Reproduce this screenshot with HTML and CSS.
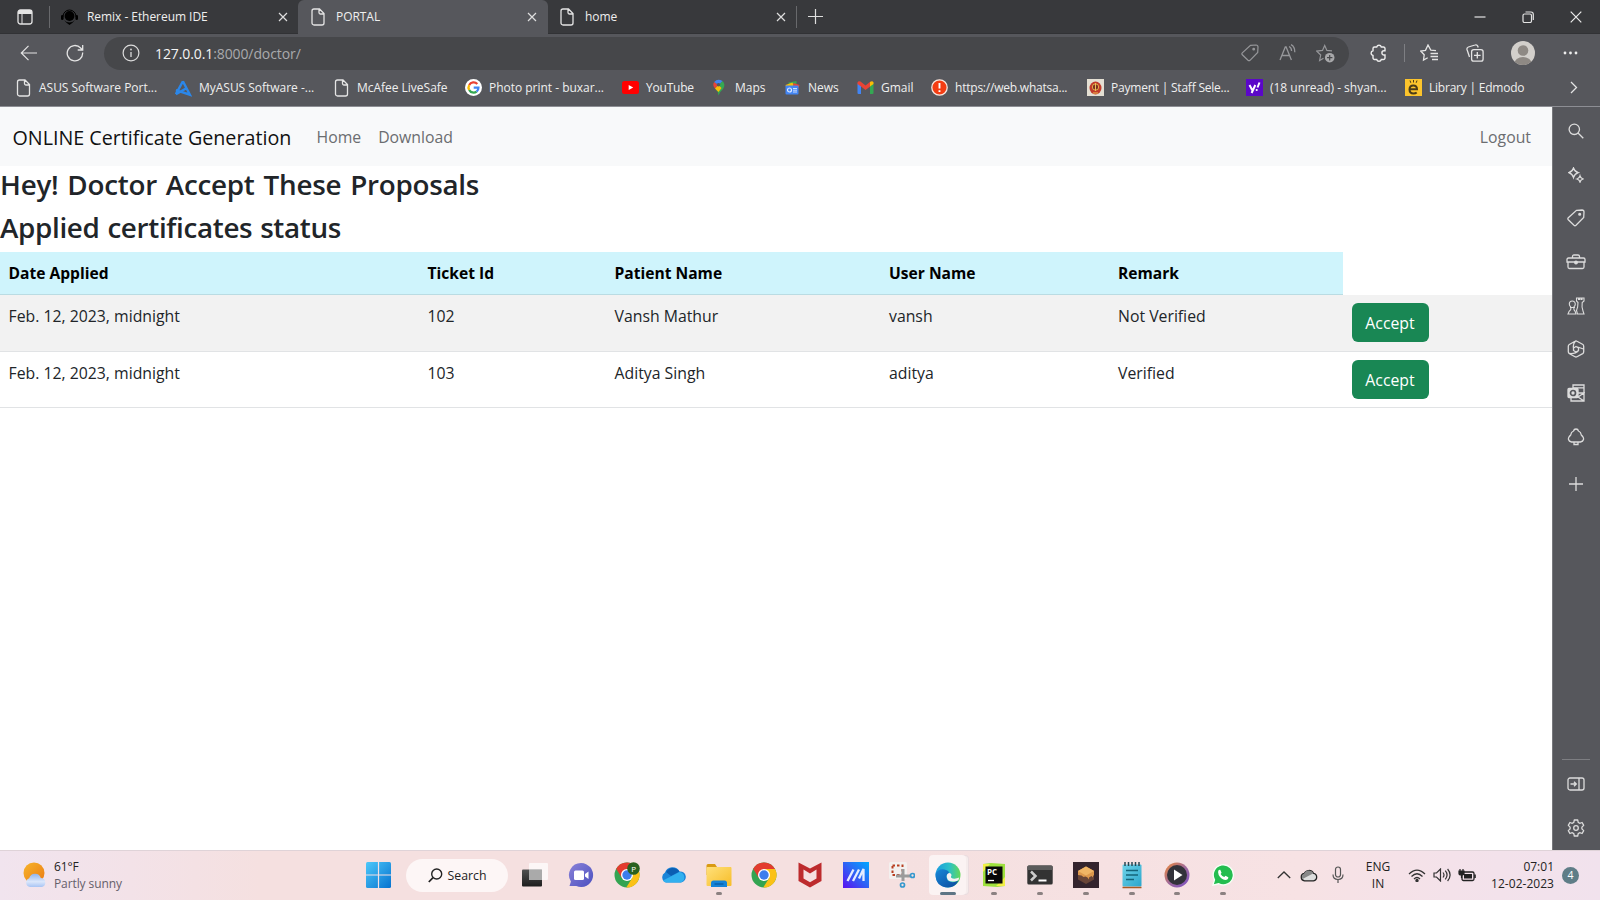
FILE: index.html
```html
<!DOCTYPE html>
<html lang="en">
<head>
<meta charset="utf-8">
<title>PORTAL</title>
<link rel="stylesheet" href="styles.css">
</head>
<body>
<svg class="defs" width="0" height="0">
  <defs>
    <linearGradient id="win" x1="0" y1="0" x2="1" y2="1"><stop offset="0" stop-color="#4cc8fa"/><stop offset="1" stop-color="#0672cf"/></linearGradient>
    <linearGradient id="sun" x1="0" y1="0" x2="1" y2="1"><stop offset="0" stop-color="#f7b52b"/><stop offset="1" stop-color="#ea7a12"/></linearGradient>
    <linearGradient id="cloud" x1="0" y1="0" x2="0" y2="1"><stop offset="0" stop-color="#8fb4ee"/><stop offset=".6" stop-color="#dbe7fb"/><stop offset="1" stop-color="#a8c4f4"/></linearGradient>
    <linearGradient id="chat" x1="0" y1="0" x2="1" y2="1"><stop offset="0" stop-color="#8a82d8"/><stop offset="1" stop-color="#4a4fc0"/></linearGradient>
    <linearGradient id="folder" x1="0" y1="0" x2="1" y2="1"><stop offset="0" stop-color="#ffe07a"/><stop offset="1" stop-color="#f7bd28"/></linearGradient>
    <linearGradient id="asus" x1="1" y1="0" x2="0" y2="1"><stop offset="0" stop-color="#00a8ff"/><stop offset=".5" stop-color="#2f62f5"/><stop offset="1" stop-color="#5a10f0"/></linearGradient>
    <linearGradient id="edgeA" x1="0" y1=".3" x2="1" y2=".3"><stop offset="0" stop-color="#1a9be0"/><stop offset=".55" stop-color="#2bc0c8"/><stop offset="1" stop-color="#63d957"/></linearGradient>
    <linearGradient id="edgeB" x1="0" y1="0" x2="1" y2="1"><stop offset="0" stop-color="#1787d8"/><stop offset="1" stop-color="#0c4a9c"/></linearGradient>
    <linearGradient id="ring" x1="0" y1="0" x2="1" y2="1"><stop offset="0" stop-color="#f08a35"/><stop offset=".5" stop-color="#a06a9a"/><stop offset="1" stop-color="#7a50c8"/></linearGradient>
    <linearGradient id="dark" x1="0" y1="0" x2="0" y2="1"><stop offset="0" stop-color="#505050"/><stop offset="1" stop-color="#1e1e1e"/></linearGradient>
    <linearGradient id="note" x1="0" y1="0" x2="1" y2="1"><stop offset="0" stop-color="#6fd3e8"/><stop offset="1" stop-color="#2ba6cc"/></linearGradient>
    <symbol id="page" viewBox="0 0 14 18"><path d="M3 1h5.500l4.500 4.500V15a2 2 0 0 1-2 2H3a2 2 0 0 1-2-2V3a2 2 0 0 1 2-2zM8 1v3.500a1.500 1.500 0 0 0 1.500 1.500H13" fill="none" stroke="#e4e4e4" stroke-width="1.300"/></symbol>
    <symbol id="close" viewBox="0 0 10 10"><path d="M1 1l8 8M9 1l-8 8" stroke="#dedede" stroke-width="1.200"/></symbol>
    <symbol id="chrome" viewBox="0 0 26 26">
      <circle cx="13" cy="13" r="12.500" fill="#33a451"/>
      <path d="M13 7h11a12.500 12.500 0 0 1-11.800 18.500L18.200 16z" fill="#fbc116"/>
      <path d="M2.200 6.700L7.800 16 13 7h11a12.500 12.500 0 0 0-21.800-.3z" fill="#e33b2e"/>
      <circle cx="13" cy="13" r="6" fill="#fff"/><circle cx="13" cy="13" r="4.700" fill="#3b7ded"/>
    </symbol>
  </defs>
</svg>

<header class="browser">
  <div class="tabs">
    <div class="tab-menu"><svg width="16" height="16" viewBox="0 0 16 16"><rect x="1" y="1" width="14" height="14" rx="2.500" fill="none" stroke="#e4e4e4" stroke-width="1.300"/><path d="M1 3.500A2.500 2.500 0 0 1 3.500 1h9A2.500 2.500 0 0 1 15 3.500V5H1z" fill="#e4e4e4"/><path d="M5 5v10" stroke="#e4e4e4"/></svg></div>
    <div class="tab tab-first">
      <svg width="17" height="16" viewBox="0 0 17 16"><circle cx="8.500" cy="7" r="4.900" fill="#000"/><path d="M2 7.500a6.500 6.500 0 0 1 13 0" fill="none" stroke="#000"/><rect x="0" y="6" width="2.600" height="5" rx="1.300"/><rect x="14.400" y="6" width="2.600" height="5" rx="1.300"/><path d="M3 11q2.500 2.500 5.500 2.500T14 11l-2.500 2.800-3 2.200-3-2.200z"/></svg>
      <span>Remix - Ethereum IDE</span><svg class="x" width="10" height="10"><use href="#close"/></svg>
    </div>
    <div class="tab tab-active"><svg width="14" height="18"><use href="#page"/></svg><span>PORTAL</span><svg class="x" width="10" height="10"><use href="#close"/></svg></div>
    <div class="tab tab-last"><svg width="14" height="18"><use href="#page"/></svg><span>home</span><svg class="x" width="10" height="10"><use href="#close"/></svg></div>
    <svg class="plus" width="15" height="15" viewBox="0 0 15 15"><path d="M7.500 0v15M0 7.500h15" stroke="#dedede" stroke-width="1.200"/></svg>
    <div class="window-buttons">
      <svg width="12" height="12" viewBox="0 0 12 12"><path d="M.5 6h11" stroke="#e4e4e4" stroke-width="1.200"/></svg>
      <svg width="12" height="12" viewBox="0 0 12 12" fill="none" stroke="#e4e4e4" stroke-width="1.200"><rect x="1" y="3" width="8.500" height="8.500" rx="1.500"/><path d="M3.500 1h5.500a2.300 2.300 0 0 1 2.300 2.300V9"/></svg>
      <svg width="12" height="12" viewBox="0 0 12 12"><path d="M.7.7l10.600 10.600M11.300.7L.7 11.300" stroke="#ededed" stroke-width="1.200"/></svg>
    </div>
  </div>

  <div class="toolbar">
    <svg class="back" width="18" height="16" viewBox="0 0 18 16" fill="none" stroke="#e4e4e4" stroke-width="1.200"><path d="M17 8H1.500M8.500.8L1.300 8l7.200 7.200"/></svg>
    <svg class="reload" width="18" height="18" viewBox="0 0 18 18" fill="none" stroke="#e4e4e4" stroke-width="1.300"><path d="M16.600 8.500A7.700 7.700 0 1 1 14.600 4l1.600 1.700M16.700 1v5h-5"/></svg>
    <div class="address">
      <svg width="18" height="18" viewBox="0 0 18 18"><circle cx="9" cy="9" r="7.900" fill="none" stroke="#dcdcdc" stroke-width="1.200"/><path d="M9 8v5" stroke="#dcdcdc" stroke-width="1.300"/><circle cx="9" cy="5.500" r=".9" fill="#dcdcdc"/></svg>
      <span class="url"><b>127.0.0.1</b>:8000/doctor/</span>
      <div class="address-icons">
        <svg width="18" height="18" viewBox="0 0 18 18" fill="none" stroke="#96979a" stroke-width="1.200"><path d="M9.500 1.300L15 1a2 2 0 0 1 2 2l-.3 5.500L9 16.300a1.500 1.500 0 0 1-2 0l-5.700-5.500a1.500 1.500 0 0 1 0-2z"/><circle cx="12.700" cy="5.200" r=".8" fill="#96979a"/></svg>
        <svg width="18" height="18" viewBox="0 0 18 18" fill="none" stroke="#96979a" stroke-width="1.300"><path d="M1 16L6.300 3h.8l5.300 13M3 11.500h7.500M10 2.500q2.500 1 2.600 4.500M12 .6q4 2 3.800 7.600"/></svg>
        <svg width="19" height="19" viewBox="0 0 19 19"><path d="M16 6.900l-5.100-.5L8.700 1.500 6.500 6.400l-5.700.7L4.700 11l-1.100 5.500L7.500 14.300" fill="none" stroke="#96979a" stroke-width="1.200"/><circle cx="13.700" cy="13.700" r="4.800" fill="#a8a8aa"/><path d="M13.700 11v5.400M11 13.700h5.400" stroke="#46474a" stroke-width="1.200"/></svg>
      </div>
    </div>
    <svg class="ext" width="17" height="18" viewBox="0 0 17 18"><path d="M3.500 3h2.200a2.400 2.400 0 0 1 4.600 0h2.200A1.500 1.500 0 0 1 14 4.500v2.300h-1a2.100 2.100 0 0 0 0 4.200h1v3a1.500 1.500 0 0 1-1.500 1.500h-2.200a2.400 2.400 0 0 1-4.600 0H3.500A1.500 1.500 0 0 1 2 14v-2.500a2.400 2.400 0 0 1 0-4.700V4.500A1.500 1.500 0 0 1 3.500 3z" transform="translate(1 0)" fill="none" stroke="#ededed" stroke-width="1.400"/></svg>
    <i class="sep"></i>
    <svg class="fav" width="18" height="18" viewBox="0 0 18 18" fill="none" stroke="#e4e4e4" stroke-width="1.300"><path d="M16 6.700l-5.200-.6L8 1 5.500 6.300l-4.800.7 3.500 3.800L3.500 16l4.200-2.300M10.500 9.500H18M10.500 12.500H18M12 15.500h6"/></svg>
    <svg class="coll" width="18" height="18" viewBox="0 0 18 18" fill="none" stroke="#e4e4e4" stroke-width="1.300"><rect x="5.600" y="5.600" width="11.500" height="11.500" rx="2.200"/><path d="M11.300 8v6.600M8 11.300h6.600M3.500 13L1 5.500A2.200 2.200 0 0 1 2.400 3L9 1a2.200 2.200 0 0 1 2.800 1.300l.4 1.200"/></svg>
    <svg class="avatar" width="24" height="24" viewBox="0 0 24 24"><clipPath id="av"><circle cx="12" cy="12" r="12"/></clipPath><g clip-path="url(#av)"><rect width="24" height="24" fill="#d2cfcb"/><circle cx="12" cy="9.500" r="5.300" fill="#8e8984"/><ellipse cx="12" cy="23" rx="8.800" ry="7" fill="#8e8984"/></g></svg>
    <svg class="more" width="15" height="4" viewBox="0 0 15 4" fill="#ededed"><circle cx="2" cy="2" r="1.400"/><circle cx="7.500" cy="2" r="1.400"/><circle cx="13" cy="2" r="1.400"/></svg>
  </div>

  <nav class="bookmarks">
    <a><svg width="16" height="18"><use href="#page"/></svg>ASUS Software Port...</a>
    <a><svg width="17" height="18" viewBox="0 0 17 18"><path d="M8.500 2.500L1.500 15.500M8.500 2.500l7 13.500L1.500 11.500M1.500 15.500L12 9.500" transform="translate(-.6 -.3)" fill="none" stroke="#2b87ea" stroke-width="2.400"/></svg>MyASUS Software -...</a>
    <a><svg width="16" height="18"><use href="#page"/></svg>McAfee LiveSafe</a>
    <a><svg width="17" height="17" viewBox="0 0 17 17" fill="none" stroke-width="2.300"><circle cx="8.500" cy="8.500" r="8.500" fill="#fff"/><path d="M12.300 5A5 5 0 0 0 4.200 6" stroke="#ea4335"/><path d="M4.200 6a5 5 0 0 0 0 5" stroke="#fbbc05"/><path d="M4.200 11a5 5 0 0 0 7.400 1.600" stroke="#34a853"/><path d="M11.600 12.600a5 5 0 0 0 1.800-3.900H8.700" stroke="#4285f4"/></svg>Photo print - buxar...</a>
    <a class="tight"><svg width="17" height="13" viewBox="0 0 17 13"><rect width="17" height="13" rx="2.500" fill="#f00"/><path d="M6.700 4v5l4.500-2.500z" fill="#fff"/></svg>YouTube</a>
    <a><svg width="16" height="17" viewBox="0 0 16 17"><path d="M7 16.500Q6.500 12 3.500 9.500L11 2q3.500 3.500.5 8-3.500 3-4.500 6.500z" fill="#34a853"/><path d="M3.500 9.500q-3-3.500-.8-6.500L7 6z" fill="#ea4335"/><path d="M2.700 3Q6-1 11 2L7 6z" fill="#4285f4"/><path d="M3.500 9.500L7 6l3 3-3 4z" fill="#fbbc05"/><circle cx="7" cy="5.800" r="1.800" fill="#56575c"/></svg>Maps</a>
    <a><svg width="16" height="16" viewBox="0 0 16 16"><path d="M4 2.500L12 1v6H4z" fill="#34a853"/><path d="M1 5l7-2.500L10 8H2z" fill="#fbbc05"/><path d="M9 3l6 2-1.500 4H8z" fill="#ea4335"/><rect x="1" y="5.500" width="13" height="9" rx="1" fill="#4285f4"/><circle cx="5" cy="10" r="2" fill="none" stroke="#dce8ff" stroke-width="1.200"/><path d="M8.500 8.500h4M8.500 10.200h4M8.500 12h4" stroke="#dce8ff" stroke-width=".9"/></svg>News</a>
    <a><svg width="16" height="13" viewBox="0 0 16 13"><path d="M0 2.500h3.500V13H1a1 1 0 0 1-1-1z" fill="#4285f4"/><path d="M12.500 2.500H16V12a1 1 0 0 1-1 1h-2.500z" fill="#34a853"/><path d="M0 3V1.500Q1-.6 3 .6L8 4.500 13 .6v4.600L8 9 3.500 5.500z" fill="#ea4335"/><path d="M12.500 1Q15-.6 16 1.500V3l-3.500 2.600z" fill="#fbbc05"/></svg>Gmail</a>
    <a class="tight"><svg width="17" height="17" viewBox="0 0 17 17"><circle cx="8.500" cy="8.500" r="7.700" fill="#f43d13" stroke="#f8e8e0" stroke-width="1.300"/><path d="M8.500 4v5.500M8.500 11.200v1.900" stroke="#fff" stroke-width="1.900"/></svg>https://web.whatsa...</a>
    <a class="tight"><svg width="17" height="17" viewBox="0 0 17 17"><rect width="17" height="17" fill="#e4dfd3"/><ellipse cx="8.500" cy="9" rx="6" ry="6.500" fill="#c23b2b"/><circle cx="8.500" cy="8" r="3.200" fill="#7e3020" stroke="#e3ac4a"/><path d="M8.500 4v8M6 14h5" stroke="#edc055"/></svg>Payment | Staff Sele...</a>
    <a><svg width="17" height="17" viewBox="0 0 17 17"><rect width="17" height="17" fill="#5b07c9"/><path d="M3.500 6l2.700 5M9.300 6l-3.700 8M13.500 3.500l-2 5" stroke="#fff" stroke-width="2"/><circle cx="10.700" cy="11" r="1.100" fill="#fff"/></svg>(18 unread) - shyan...</a>
    <a class="tight"><svg width="17" height="17" viewBox="0 0 17 17"><rect width="17" height="17" fill="#fcc42c"/><path d="M4.800 10.300h7.200q0-3.800-3.700-3.800T4.500 10.500q0 4 4 4 2 0 3.200-1" fill="none" stroke="#4b3c18" stroke-width="2"/><path d="M5 1.500l.8 2.300M8.500 1v2.500M12 1.500l-.8 2.300" stroke="#4b3c18"/></svg>Library | Edmodo</a>
    <svg class="chev" width="8" height="13" viewBox="0 0 8 13"><path d="M1 1l5.500 5.500L1 12" fill="none" stroke="#e4e4e4" stroke-width="1.300"/></svg>
  </nav>
</header>

<div class="middle">
  <main class="page">
    <nav class="navbar"><span class="brand">ONLINE Certificate Generation</span><a>Home</a><a>Download</a><a class="logout">Logout</a></nav>
    <h3 class="h-hey">Hey! Doctor Accept These Proposals</h3>
    <h3 class="h-status">Applied certificates status</h3>
    <table>
      <colgroup><col class="c1"><col class="c2"><col class="c3"><col class="c4"><col class="c5"><col class="c6"></colgroup>
      <thead><tr><th>Date Applied</th><th>Ticket Id</th><th>Patient Name</th><th>User Name</th><th>Remark</th></tr></thead>
      <tbody>
        <tr class="odd"><td>Feb. 12, 2023, midnight</td><td>102</td><td>Vansh Mathur</td><td>vansh</td><td>Not Verified</td><td><button>Accept</button></td></tr>
        <tr><td>Feb. 12, 2023, midnight</td><td>103</td><td>Aditya Singh</td><td>aditya</td><td>Verified</td><td><button>Accept</button></td></tr>
      </tbody>
    </table>
  </main>
  <aside class="sidebar">
    <div><svg width="16" height="16" viewBox="0 0 16 16"><circle cx="6.300" cy="6.300" r="5.200"/><path d="M10 10l5.300 5.300"/></svg></div>
    <div><svg width="16" height="16" viewBox="0 0 16 16"><path d="M5.500 1q1 3.500 4.700 4.700Q6.500 7 5.500 10.500 4.500 7 .8 5.700 4.500 4.500 5.500 1zM12 9q.6 2.300 3 3-2.400.8-3 3-.6-2.200-3-3 2.400-.7 3-3z"/></svg></div>
    <div><svg width="18" height="18" viewBox="0 0 18 18"><path d="M9.500 1.300L15 1a2 2 0 0 1 2 2l-.3 5.500L9 16.300a1.500 1.500 0 0 1-2 0l-5.700-5.500a1.500 1.500 0 0 1 0-2z"/><circle cx="12.700" cy="5.200" r=".9" fill="#ddd"/></svg></div>
    <div><svg width="20" height="16" viewBox="0 0 20 16"><path d="M2.500 4h15q1.500 0 1.500 1.500V8H1V5.500Q1 4 2.500 4zM2 8v5q0 1.500 1.500 1.500h13q1.500 0 1.500-1.500V8M6.500 4V2.500Q6.500 1 8 1h4q1.500 0 1.500 1.500V4"/><circle cx="10" cy="8.500" r="1.300" fill="#ddd"/></svg></div>
    <div><svg class="fine" width="18" height="18" viewBox="0 0 18 18"><path d="M4 10q-1.700-1-1.700-3a3 3 0 0 1 6 0q0 2-1.600 3M3 10.500h5M4 10.500q.3 2.500-2 4L1 17h8l-.8-2.500Q6.500 13 6.800 10.500M9.500 1v3l1.500 1.500q0 5-1.500 8l1 3.500H17l-1-3q-1.500-4-.8-8.500L17 4V1h-2v1.500h-1V1h-1.500v1.500h-1V1z"/></svg></div>
    <div><svg width="18" height="18" viewBox="0 0 18 18"><path d="M8 1.300q1-.6 2 0l5.500 3q1.200.7 1.200 2v5.500q0 1.200-1 1.800L10 16.700q-1 .6-2 0l-5.500-3q-1.200-.7-1.200-2V6.300q0-1.200 1-1.800zM9 6.500l2.500 1.500v2.500L9 12l-2.500-1.500V8zM6.500 8q-.8-4 2-7M9 6.500L16.500 9M11.500 10.500q-3 3.500-9 3"/></svg></div>
    <div><svg width="18" height="18" viewBox="0 0 18 18"><path d="M6 4V1h11v16H4v-3M6 3.800h11M11 9h6l-6 4 6 4"/><rect x="1" y="4.500" width="10" height="9" rx="1" fill="#ddd"/><circle cx="6" cy="9" r="2.500" stroke="#56575c" stroke-width="1.700"/></svg></div>
    <div><svg width="18" height="18" viewBox="0 0 18 18"><path d="M9 1Q11 1 11.500 3q2.500 1 2.800 4 2.700 2.500 2.200 4.500T13.500 14h-9q-2.500-.5-3-2.500T3.700 7Q4 4 6.500 3 7 1 9 1zM7 14v2.500h4V14"/></svg></div>
    <div class="add"><svg width="14" height="14" viewBox="0 0 14 14"><path d="M7 0v14M0 7h14"/></svg></div>
    <hr>
    <div><svg width="18" height="14" viewBox="0 0 18 14"><rect x="1" y="1" width="16" height="12" rx="2"/><path d="M12 1v12M3.500 7h5.500M7 4.700L9.300 7 7 9.300"/></svg></div>
    <div class="gear"><svg width="18" height="18" viewBox="0 0 18 18"><circle cx="9" cy="9" r="2.300"/><path d="M7.300 1h3.400l.5 2.400 1.500.9 2.400-.8 1.600 2.900-1.800 1.700v1.800l1.800 1.700-1.600 2.900-2.400-.8-1.500.9-.5 2.400H7.300l-.5-2.400-1.500-.9-2.400.8-1.600-2.900 1.800-1.700V8.100L1.300 6.400l1.600-2.900 2.400.8 1.500-.9z" stroke-linejoin="round"/></svg></div>
  </aside>
</div>

<footer class="taskbar">
  <div class="weather"><svg width="24" height="26" viewBox="0 0 24 26"><circle cx="11" cy="11" r="10.500" fill="url(#sun)"/><path d="M7 25a4.500 4.500 0 0 1-.8-8.700A6 6 0 0 1 17.800 16 4.600 4.600 0 0 1 19 25z" fill="url(#cloud)"/></svg><div><p>61°F</p><p class="dim">Partly sunny</p></div></div>
  <div class="start"><svg width="25" height="26" viewBox="0 0 25 26"><rect width="25" height="26" rx="1.500" fill="url(#win)"/><path d="M12.500 0v26M0 13h25" stroke="#f3e0e4" stroke-width="1.200"/></svg></div>
  <div class="search"><svg width="15" height="15" viewBox="0 0 15 15"><circle cx="8.700" cy="6" r="5" fill="none" stroke="#222" stroke-width="1.400"/><path d="M5 9.700L.8 14" stroke="#222" stroke-width="1.700"/></svg>Search</div>
  <div class="apps">
    <div><svg width="26" height="26" viewBox="0 0 26 26"><rect x="0" y="7.500" width="20" height="17" rx="1" fill="url(#dark)"/><rect x="7" y="1" width="19" height="17" rx="1" fill="#fff" opacity=".7"/><rect x="7" y="7.500" width="13" height="10.500" fill="#aaa"/></svg></div>
    <div><svg width="26" height="26" viewBox="0 0 26 26"><path d="M13 1a12 12 0 1 1-4.700 23H1.500l1.400-4.500A12 12 0 0 1 13 1z" fill="url(#chat)"/><rect x="6" y="8.500" width="10" height="9.500" rx="1.500" fill="#fff"/><path d="M17 12l3.500-2.500v7.500L17 14.500z" fill="#fff"/></svg></div>
    <div><svg width="26" height="26" viewBox="0 0 26 26"><use href="#chrome" width="26" height="26"/><circle cx="19.500" cy="6.500" r="6.300" fill="#28611f"/><text x="17.200" y="9.600" font-size="8" fill="#fff">P</text></svg></div>
    <div><svg width="26" height="18" viewBox="0 0 26 18"><path d="M6 16.500A5.500 5.500 0 0 1 5 6.500 8 8 0 0 1 19.500 5.500 5.500 5.500 0 0 1 21 16.500z" fill="#1a84d8"/><path d="M6 6A8 8 0 0 1 19.500 5.500L11 10z" fill="#0b5eb3"/><path d="M3 14.500L19.500 6A5.500 5.500 0 0 1 21 16.500H6q-2 0-3-2z" fill="#31b0ef"/></svg></div>
    <div class="run"><svg width="26" height="26" viewBox="0 0 26 26"><path d="M.5 3.500Q.5 2 2 2h7l2 3H25v8H.5z" fill="#d99a13"/><rect x=".5" y="5" width="25" height="19" rx="1" fill="url(#folder)"/><path d="M5 25v-4q0-2.500 2.500-2.500h11Q21 18.500 21 21v4z" fill="#1583d7"/><path d="M8.500 22h9" stroke="#0a60ab" stroke-width="1.500"/></svg></div>
    <div><svg width="26" height="26"><use href="#chrome"/></svg></div>
    <div><svg width="24" height="26" viewBox="0 0 24 26"><path d="M.5.500L12 6.500 23.500.5v18.500L12 25.500.5 19z" fill="#bd2b2d"/><path d="M5.500 7.500L12 11.500l6.500-4v9L12 20.300l-6.500-3.800z" fill="#f5e0e0"/></svg></div>
    <div><svg width="26" height="26" viewBox="0 0 26 26"><rect width="26" height="26" fill="url(#asus)"/><path d="M4.500 19L10.500 7.500M10 19L16 7.500M16 16.500L20.500 7v12" fill="none" stroke="#e5ecff" stroke-width="2.300"/></svg></div>
    <div><svg width="26" height="26" viewBox="0 0 26 26"><rect x="0" y="0" width="18" height="17" rx="1.500" fill="#f3f0ef"/><rect x="3.500" y="3.500" width="10" height="9.500" fill="none" stroke="#b83e20" stroke-width="2" stroke-dasharray="2.500 2"/><path d="M7 14h14M14 7v12" stroke="#9b9b9b" stroke-width="3"/><g fill="none" stroke="#3598ce" stroke-width="1.700"><circle cx="23.500" cy="13.500" r="2"/><circle cx="13.500" cy="23" r="2"/></g></svg></div>
    <div class="edge"><svg width="26" height="26" viewBox="0 0 26 26"><circle cx="13" cy="13" r="12.500" fill="url(#edgeA)"/><path d="M.6 12Q3 6.500 9.500 7.500q5 1 4.500 4-3 .5-2.500 4 1 5.500 8 4.500l4-1.500Q20 25.500 13 25.500.5 25 .6 12z" fill="url(#edgeB)"/><path d="M14 11q-3 1-2 5t7 3.500q3.500-.5 4.500-1.500l.7-2.500q-3 1.500-6.500 1-2.700-.7-1.200-3Q16.500 11 14 11z" fill="#f6f1f2"/></svg></div>
    <div class="run"><svg width="26" height="26" viewBox="0 0 26 26"><path d="M2 2l8-1 14 1v22l-8 1L2 24z" fill="#9ee13e"/><path d="M2 2h7l-7 8zM24 15v9h-9z" fill="#f1ef45"/><rect x="4.500" y="4.500" width="17" height="17" fill="#080808"/><text x="6" y="12.500" font-size="8" font-weight="700" fill="#fff">PC</text><path d="M7 18.500h6" stroke="#fff" stroke-width="1.300"/></svg></div>
    <div class="run"><svg width="26" height="20" viewBox="0 0 26 20"><rect x=".3" y=".5" width="25.400" height="19" rx="1.500" fill="#333"/><path d="M.3 5V2q0-1.500 1.500-1.500h22.400q1.500 0 1.500 1.500v3z" fill="#5c5c5c"/><path d="M4 6.500l4.500 4.500L4 15.500" fill="none" stroke="#ccc" stroke-width="2.500"/><path d="M11.500 15.500h8" stroke="#fff" stroke-width="2"/></svg></div>
    <div class="run"><svg width="26" height="26" viewBox="0 0 26 26"><rect width="26" height="26" fill="#34242d"/><path d="M13 4.500l8 4.500v8.500L13 22l-8-4.500V9z" fill="#694537"/><path d="M13 4.500l8 4.500v4l-1 1v1.500l-1.500-1.500-2.500 1.500v2l-1.500-2-2-1-2 .5-2-1.500L5 13V9z" fill="#dd984c"/><path d="M13 4.500L21 9l-8 4.500L5 9z" fill="#f0b565"/></svg></div>
    <div class="run"><svg width="20" height="27" viewBox="0 0 20 27"><rect x=".5" y="2.500" width="19" height="22" rx="1" fill="url(#note)"/><path d="M.5 25.500h19" stroke="#aa5b23" stroke-width="1.500"/><path d="M3 0v4M6.500 0v4M10 0v4M13.500 0v4M17 0v4" stroke="#2b4651" stroke-width="1.500"/><path d="M4 8.500h12M4 13h12M4 17.500h8" stroke="#14647a" stroke-width="1.500"/></svg></div>
    <div class="run"><svg width="26" height="26" viewBox="0 0 26 26"><circle cx="13" cy="13" r="12.500" fill="url(#ring)"/><circle cx="13" cy="13" r="10" fill="#32323a"/><path d="M10 7.500v11l8.500-5.500z" fill="#fff"/></svg></div>
    <div class="run"><svg width="22" height="22" viewBox="0 0 24 24"><path d="M1 23l1.700-5.800A11 11 0 1 1 7 21.500z" fill="#24bd4f" stroke="#f6fff6" stroke-width="1.500"/><path d="M7.300 6.500l1.700-.3 1.400 3.300-1 1.300q1.500 2.600 4 3.500l1.300-1.400 3.100 1.500q0 3-3.300 3Q10 17 7.300 12q-1.500-3.500 0-5.500z" fill="#fff"/></svg></div>
  </div>
  <div class="tray">
    <svg width="14" height="8" viewBox="0 0 14 8"><path d="M.8 7L7 1l6.200 6" fill="none" stroke="#333" stroke-width="1.300"/></svg>
    <svg class="t-cloud" width="18" height="13" viewBox="0 0 18 13"><path d="M4.500 11.800a3.700 3.700 0 0 1-.3-7.300A5.200 5.200 0 0 1 13.500 4.300a3.800 3.800 0 0 1 0 7.500z" fill="#ddd" stroke="#222" stroke-width="1.300"/><path d="M4.200 4.500A5.200 5.200 0 0 1 13.500 4.300L2.500 10Q.5 6 4.200 4.500z" fill="#888"/></svg>
    <svg class="t-mic" width="12" height="18" viewBox="0 0 12 18" fill="none" stroke="#555" stroke-width="1.200"><rect x="3.500" y="1" width="5" height="10" rx="2.500"/><path d="M1 8.500q0 5 5 5t5-5M6 13.500V17"/></svg>
    <div class="lang"><p>ENG</p><p>IN</p></div>
    <svg class="t-wifi" width="18" height="13" viewBox="0 0 18 13" fill="none" stroke="#333" stroke-width="1.200"><path d="M1 5q8-8 16 0M3.500 7.500q5.500-5.500 11 0M6 10q3-3 6 0"/><circle cx="9" cy="11.500" r="1.100" fill="#333"/></svg>
    <svg class="t-sound" width="18" height="14" viewBox="0 0 18 14" fill="none" stroke="#333" stroke-width="1.200"><path d="M1 5h2.500L7.500 1v12l-4-4H1zM10 4.500q2 2.500 0 5M12.300 2.700q3.500 4.300 0 8.600M14.600 1q5 6 0 12"/></svg>
    <svg class="t-bat" width="18" height="15" viewBox="0 0 18 15"><rect x="4" y="4" width="12" height="8.500" rx="1.500" fill="none" stroke="#222" stroke-width="1.300"/><rect x="6" y="6" width="8" height="4.500" fill="#222"/><path d="M17 6.500v3.500" stroke="#222" stroke-width="1.600"/><path d="M1 3h5v2.500Q6 7 3.500 7T1 5.500zM2 1v2.500M5 1v2.500M3.500 7v3" fill="#222" stroke="#222" stroke-width="1.200"/></svg>
    <div class="clock"><p>07:01</p><p class="date">12-02-2023</p></div>
    <span class="badge">4</span>
  </div>
</footer>
</body>
</html>
```
FILE: styles.css
```css
* { box-sizing: border-box; }
body { margin: 0; width: 1600px; height: 900px; overflow: hidden; display: flex; flex-direction: column; font-family: "Open Sans", "Noto Sans", sans-serif; background: #fff; }
p, h3 { margin: 0; }
svg { display: block; flex: none; }
.defs { position: absolute; }
span, a, p, th, td { white-space: nowrap; }

.browser { height: 107px; flex: none; background: #56575c; border-bottom: 1px solid #8d8e94; color: #efefef; font-size: 12px; }
.tabs { height: 34px; display: flex; align-items: center; background: #38393c; border-bottom: 1px solid #313235; }
.tab-menu { width: 50px; height: 22px; padding: 3px 0 0 17px; border-right: 1px solid #68696c; }
.tab { display: flex; align-items: center; height: 34px; }
.tab span { margin-left: 9px; letter-spacing: -.05px; }
.tab .x { margin-left: auto; }
.tab-first { width: 248px; padding: 0 10px 0 11px; border-bottom-right-radius: 5px; }
.tab-active { width: 250px; padding: 0 11px 0 13px; background: #56575c; border-radius: 6px 6px 0 0; }
.tab-active span { margin-left: 11px; }
.tab-last { width: 249px; height: 22px; padding: 0 10px 0 12px; border-right: 1px solid #68696c; }
.tab-last span { margin-left: 11px; }
.plus { margin-left: 11px; }
.window-buttons { margin-left: auto; display: flex; gap: 36px; padding-right: 18px; }

.toolbar { height: 38px; display: flex; align-items: center; }
.back { margin-left: 20px; }
.reload { margin-left: 28px; }
.address { margin-left: 20px; width: 1245px; height: 33px; border-radius: 17px; background: #46474a; display: flex; align-items: center; padding: 0 14px 0 18px; }
.url { margin-left: 15px; font-size: 14px; letter-spacing: -.1px; color: #a9aaad; }
.url b { font-weight: 400; color: #f4f4f4; }
.address-icons { margin-left: auto; display: flex; gap: 19.500px; }
.ext { margin-left: 21px; }
.sep { width: 1px; height: 18px; background: #7e7f83; margin-left: 17px; }
.fav { margin-left: 15px; }
.coll { margin-left: 28px; }
.avatar { margin-left: 27px; }
.more { margin-left: 28px; }

.bookmarks { height: 31px; padding-left: 15px; display: grid; grid-template-columns: 160px 158px 132px 157px 89px 73px 73px 74px 156px 159px 159px 165px auto; align-items: center; letter-spacing: -.02px; }
.bookmarks a { display: flex; align-items: center; gap: 8px; }
.bookmarks a svg { width: 17px; margin-right: -1px; }
.bookmarks .tight { letter-spacing: -.22px; }

.middle { height: 743px; flex: none; display: flex; }
.page { width: 1552px; flex: none; color: #212529; font-size: 15.8px; }
.navbar { height: 59px; background: #f8f9fa; display: flex; align-items: center; padding: 1px 21px 0 12.5px; color: #6b6d70; }
.brand { font-size: 19.7px; color: #111; width: 304px; }
.navbar a + a { margin-left: 17px; }
.navbar .logout { margin-left: auto; }
h3 { font-size: 27.8px; font-weight: 600; line-height: 35px; height: 43px; padding-top: 1px; }
.h-hey { letter-spacing: -.26px; word-spacing: 2px; }
.h-status { letter-spacing: -.33px; word-spacing: 1px; }
table { border-collapse: separate; border-spacing: 0; table-layout: fixed; width: 1552px; }
.c1 { width: 419px; } .c2 { width: 187px; } .c3 { width: 274.500px; } .c4 { width: 229px; } .c5 { width: 233.500px; } .c6 { width: 209px; }
th, td { text-align: left; vertical-align: top; padding: 8px 8.500px; line-height: 26px; }
th { background: #cff4fc; color: #000; font-weight: 700; font-size: 15.600px; border-bottom: 1px solid #badce3; }
td { padding: 8px 8.500px; border-bottom: 1px solid #e1e3e5; }
.odd td { padding-bottom: 9px; background: #f2f2f2; }
button { display: block; width: 77px; height: 39px; margin: 0; padding: 0; border: 0; border-radius: 6px; background: #198754; color: #fff; font: 15.8px "Open Sans", "Noto Sans", sans-serif; }

.sidebar { width: 48px; background: #56575c; border-left: 1px solid #77787c; display: flex; flex-direction: column; padding: 2px 2px 0 0; }
.sidebar div { height: 43.700px; display: flex; align-items: center; justify-content: center; }
.sidebar .add { height: 50px; }
.sidebar svg { fill: none; stroke: #dcdcdc; stroke-width: 1.300; }
.sidebar .fine { stroke-width: 1.100; }
.sidebar hr { width: 28px; height: 1px; border: 0; background: #7d7e82; margin: auto auto 3px; }

.taskbar { height: 50px; flex: none; display: flex; align-items: center; border-top: 1px solid #dfd3d8; color: #222; font-size: 12px; background: linear-gradient(90deg, #f1e4ee 0, #f3e2e8 130px, #f5e0e0 260px, #f5e0e0 900px, #f7e2e4 1300px, #f4e2ea 1450px, #f1e2ed 1600px); padding-bottom: 1px; }
.weather { width: 366px; display: flex; align-items: center; padding-left: 23px; gap: 7px; line-height: 17px; letter-spacing: -.1px; }
.dim { color: #66606a; }
.start { width: 40px; }
.search { width: 102px; height: 33px; border-radius: 17px; background: #fdf6f6; display: flex; align-items: center; justify-content: center; gap: 5px; font-size: 12.3px; }
.apps { display: flex; margin-left: 4px; }
.apps > div { width: 45.900px; height: 48px; display: flex; align-items: center; justify-content: center; position: relative; }
.run::after, .edge::after { content: ""; position: absolute; bottom: 4px; width: 6px; height: 3px; border-radius: 2px; background: #8b8181; }
.edge::after { width: 16px; background: #5e7585; }
.edge::before { content: ""; position: absolute; inset: 4px 5px 4px 4px; border-radius: 4px; background: #fbf3f3; box-shadow: 3px 0 0 -1px #f5ecec, 3px 0 0 #eadcdf; }
.edge svg { position: relative; }
.tray { margin-left: auto; display: flex; align-items: center; line-height: 17px; padding-right: 21px; }
.t-cloud { margin-left: 9px; }
.t-mic { margin-left: 14px; }
.lang { width: 40px; margin-left: 14px; text-align: center; }
.t-wifi { margin-left: 10px; }
.t-sound { margin-left: 7px; }
.t-bat { margin-left: 7px; }
.clock { width: 78px; text-align: right; }
.date { letter-spacing: .03px; }
.badge { width: 17px; height: 17px; margin-left: 8px; border-radius: 50%; background: #5f7d87; color: #fff; font-size: 10.5px; line-height: 17px; text-align: center; }
```
